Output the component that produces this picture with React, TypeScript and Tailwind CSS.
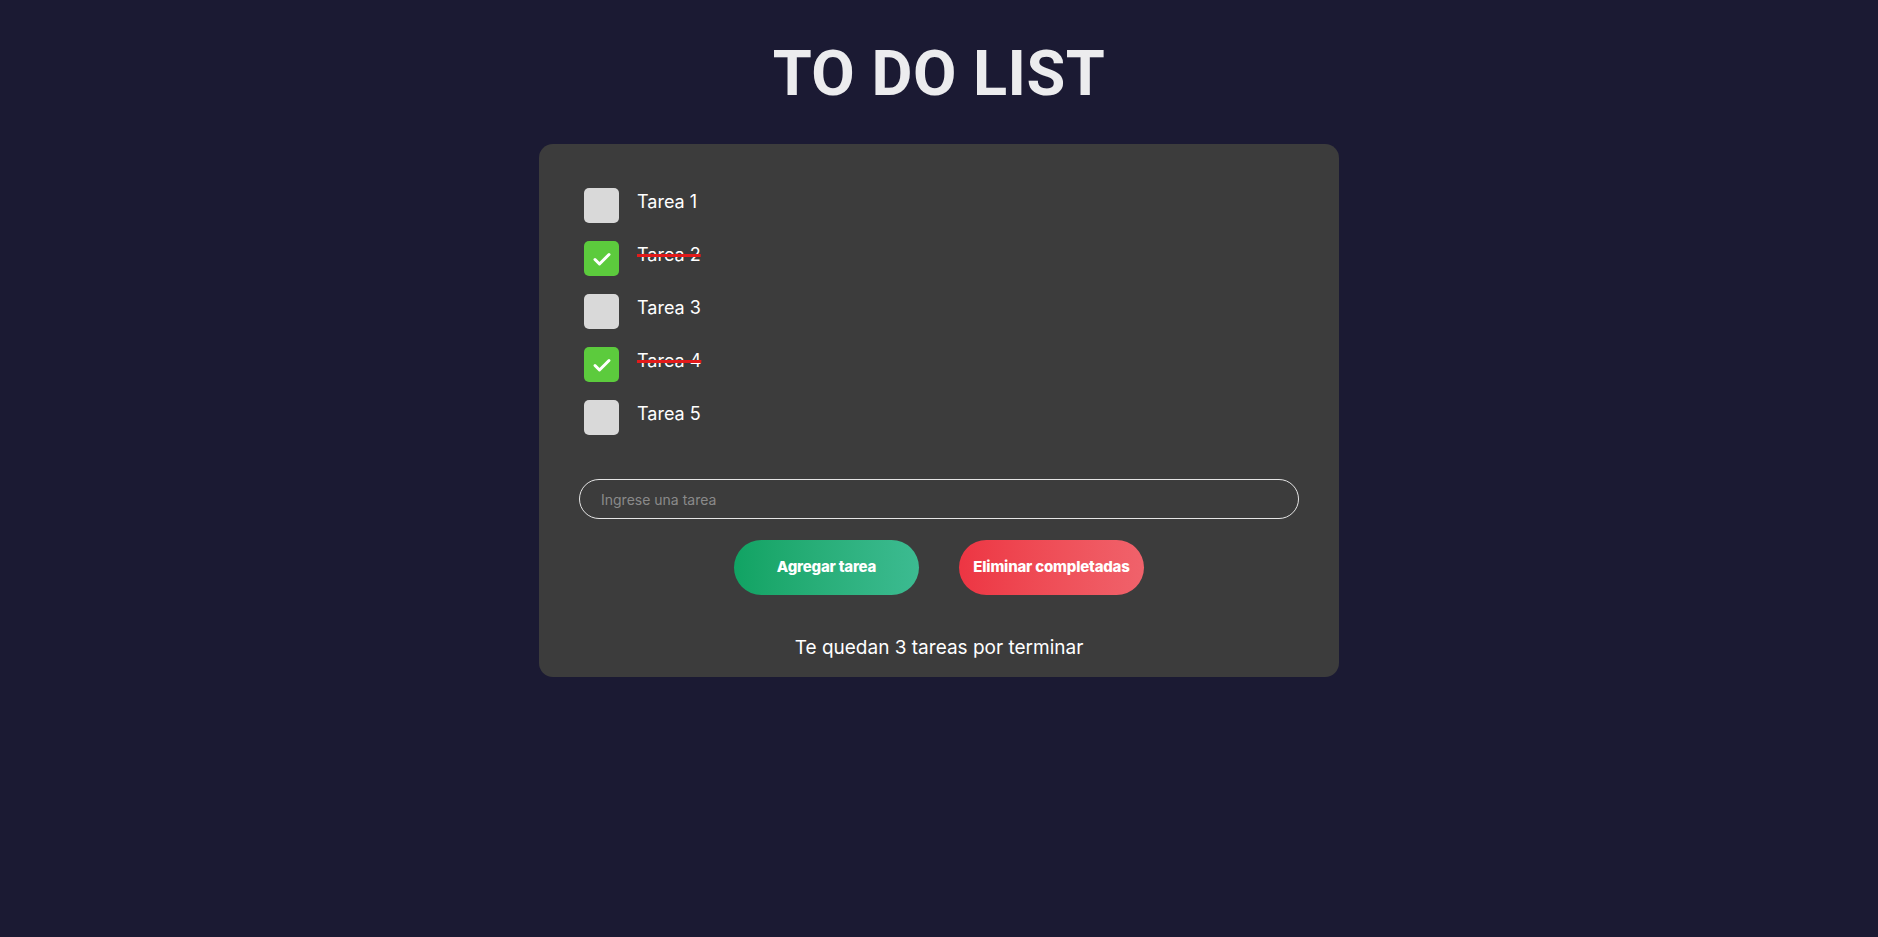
import { useState } from "react";

type Task = { id: number; text: string; done: boolean };

const initial: Task[] = [
  { id: 1, text: "Tarea 1", done: false },
  { id: 2, text: "Tarea 2", done: true },
  { id: 3, text: "Tarea 3", done: false },
  { id: 4, text: "Tarea 4", done: true },
  { id: 5, text: "Tarea 5", done: false },
];

export default function App() {
  const [tasks, setTasks] = useState<Task[]>(initial);
  const [value, setValue] = useState("");

  const toggle = (id: number) =>
    setTasks(ts => ts.map(t => (t.id === id ? { ...t, done: !t.done } : t)));

  const add = () => {
    if (!value.trim()) return;
    setTasks(ts => [...ts, { id: Date.now(), text: value.trim(), done: false }]);
    setValue("");
  };

  const pending = tasks.filter(t => !t.done).length;

  return (
    <div className="min-h-screen bg-[#1b1a33] flex flex-col items-center font-['Inter',sans-serif]">
      <h1 className="mt-[38px] text-[63px] leading-[72px] font-bold text-[#ececee] font-['Roboto',sans-serif] tracking-[0.5px]">
        TO DO LIST
      </h1>

      <div className="mt-[34px] w-[800px] bg-[#3c3c3c] rounded-[14px] px-10 pt-[44px] pb-[14px]">
        {/* Tasks */}
        <ul className="flex flex-col gap-[18px] pl-[5px]">
          {tasks.map(t => (
            <li key={t.id} className="flex items-center gap-[18px] h-[35px]">
              <button
                onClick={() => toggle(t.id)}
                className={`w-[35px] h-[35px] shrink-0 rounded-[5px] flex items-center justify-center ${
                  t.done ? "bg-[#5ccb3d]" : "bg-[#d9d9d9]"
                }`}
              >
                {t.done && (
                  <svg width="24" height="24" viewBox="0 0 24 24" fill="none" stroke="white" strokeWidth="3" strokeLinecap="round" strokeLinejoin="round">
                    <path d="M5 12.5l4.5 4.5L19 7.5" />
                  </svg>
                )}
              </button>
              <span
                className={`pb-[8px] text-[18px] text-white ${
                  t.done ? "line-through decoration-[#e21b1b] decoration-[3px]" : ""
                }`}
              >
                {t.text}
              </span>
            </li>
          ))}
        </ul>

        {/* Input */}
        <input
          value={value}
          onChange={e => setValue(e.target.value)}
          placeholder="Ingrese una tarea"
          className="mt-[44px] w-full h-[40px] rounded-full border border-[#e5e5e5] bg-transparent px-[21px] text-[14px] text-white placeholder:text-[#8a8a8a] outline-none"
        />

        {/* Buttons */}
        <div className="mt-[21px] flex justify-center gap-[40px]">
          <button
            onClick={add}
            className="w-[185px] h-[55px] rounded-full bg-gradient-to-r from-[#10a363] to-[#3cbb91] text-white text-[15px] font-extrabold tracking-[-0.2px]"
          >
            Agregar tarea
          </button>
          <button
            onClick={() => setTasks(ts => ts.filter(t => !t.done))}
            className="w-[185px] h-[55px] rounded-full bg-gradient-to-r from-[#ed3543] to-[#f0626b] text-white text-[15px] font-extrabold tracking-[-0.2px]"
          >
            Eliminar completadas
          </button>
        </div>

        <p className="mt-[39px] text-center text-[19px] text-white">
          Te quedan {pending} tareas por terminar
        </p>
      </div>
    </div>
  );
}
